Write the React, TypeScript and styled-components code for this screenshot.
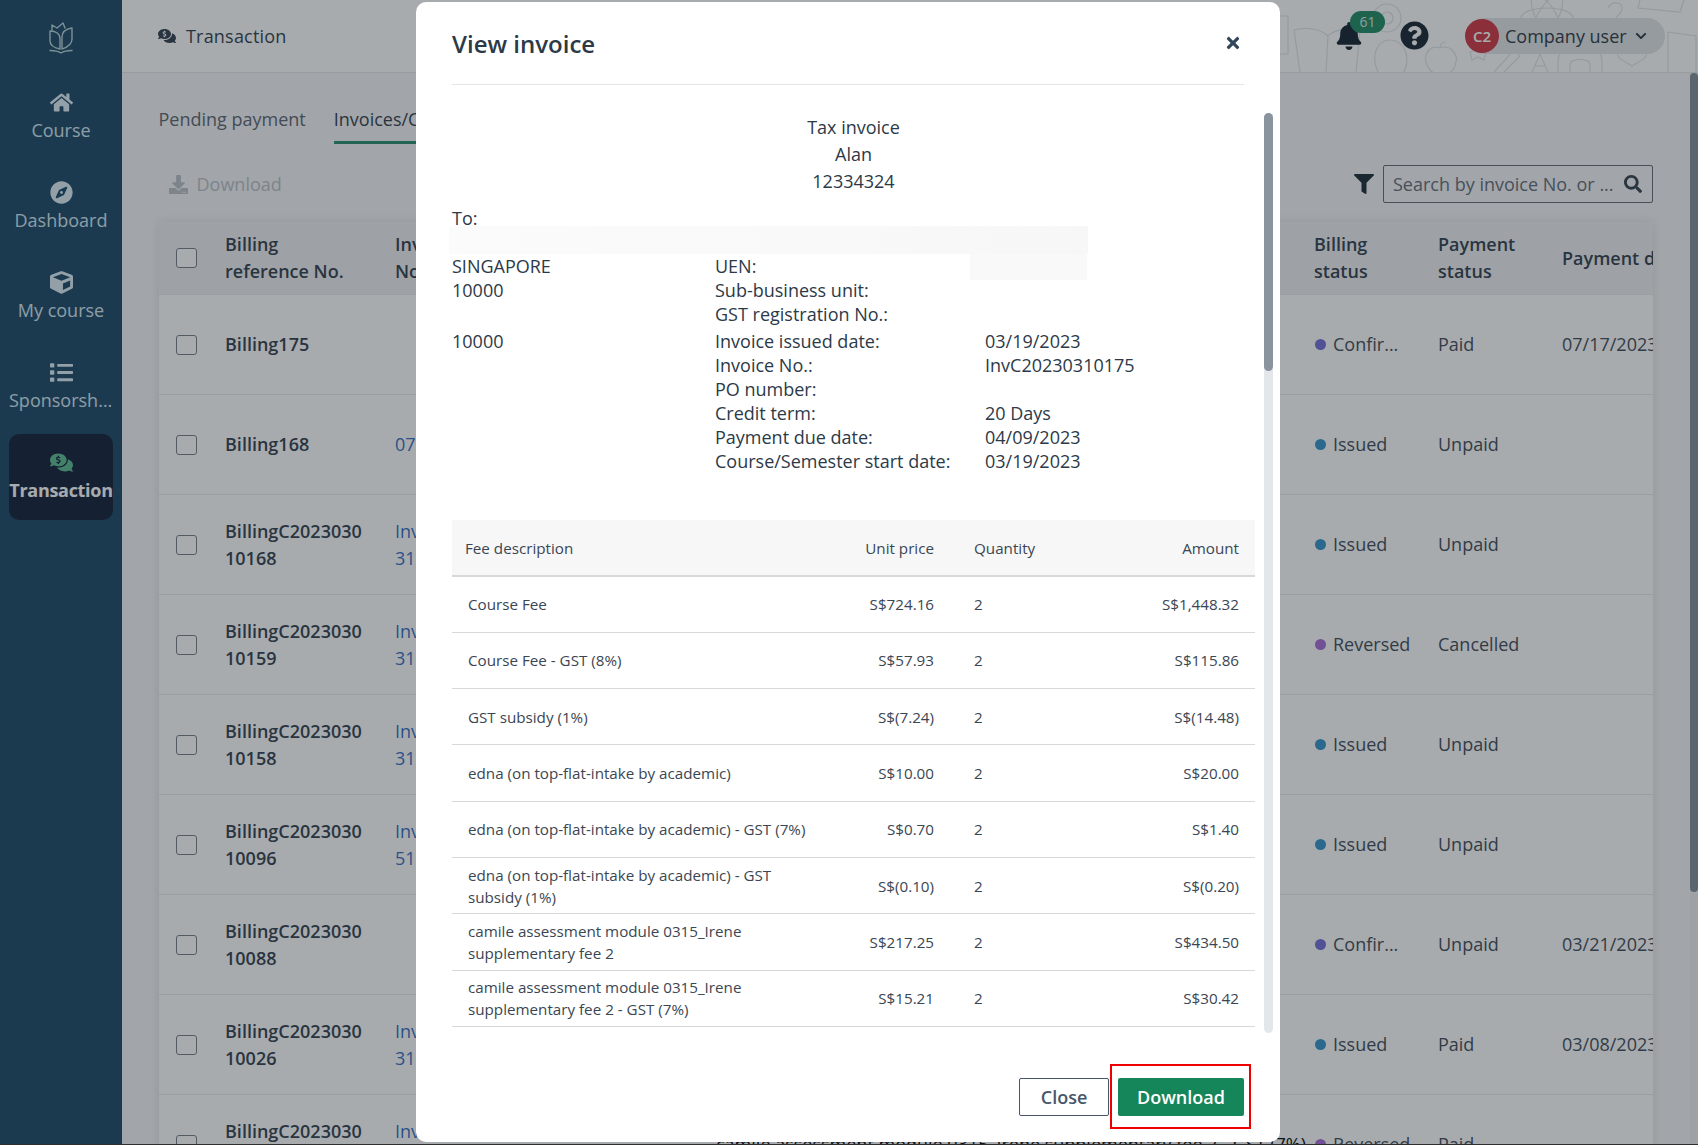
import React from "react";
import styled, { createGlobalStyle } from "styled-components";
import {
  FaHome, FaCompass, FaCube, FaList, FaCommentsDollar, FaDownload, FaFilter, FaSearch,
  FaBell, FaQuestionCircle, FaTimes, FaChevronDown,
} from "react-icons/fa";

const Global = createGlobalStyle`
  html, body { margin: 0; padding: 0; height: 100%; overflow: hidden; }
  body { font-family: "Open Sans", "Noto Sans", sans-serif; color: #2c3a48; }
  * { box-sizing: border-box; }
`;

const Layout = styled.div`
  display: flex; width: 1698px; height: 1145px; overflow: hidden; background: #f5f6f7;
  border-bottom: 1px solid #333;
`;
const Sidebar = styled.nav`
  width: 122px; flex: none; background: #144363; display: flex; flex-direction: column; gap: 4px;
`;
const LogoBox = styled.div`
  height: 70px; display: flex; align-items: flex-start; justify-content: center; padding-top: 22px; color: #b6d3d6;
`;
const NavItem = styled.div<{ $active?: boolean }>`
  width: 104px; height: 86px; margin: 0 auto; border-radius: 10px; padding-top: 17px;
  display: flex; flex-direction: column; align-items: center;
  background: ${p => (p.$active ? "#0a1a33" : "transparent")};
  color: ${p => (p.$active ? "#ffffff" : "#d4e7f0")};
  svg { font-size: 23px; height: 23px; color: ${p => (p.$active ? "#57b98f" : "#dcedf5")}; flex: none; }
`;
const NavLabel = styled.div<{ $active?: boolean }>`
  margin-top: 3px; font-size: 18px; line-height: 27px; width: 104px; text-align: center;
  white-space: nowrap; overflow: hidden; text-overflow: ellipsis;
  font-weight: ${p => (p.$active ? 700 : 400)};
  letter-spacing: ${p => (p.$active ? "-0.3px" : "0")};
`;

const Main = styled.div`flex: 1; min-width: 0; display: flex; flex-direction: column;`;
const Header = styled.header`
  height: 73px; flex: none; background: #ffffff; border-bottom: 1px solid #e4e6e9; position: relative;
  display: flex; align-items: center; padding-left: 36px;
`;
const Doodles = styled.svg`
  position: absolute; right: 0; top: 0; width: 418px; height: 72px; fill: none; stroke: #dfe3e6; stroke-width: 1.2;
`;
const PageTitle = styled.div`
  display: flex; align-items: center; gap: 10px; font-size: 18px; font-weight: 400; color: #2b3a48; letter-spacing: .2px;
  svg { font-size: 18px; color: #2b3a48; }
`;
const HeaderRight = styled.div`
  position: absolute; top: 0; left: 1213px; height: 72px; width: 360px;
`;
const BellWrap = styled.div`
  position: absolute; left: 0; top: 22px; color: #0d1b28; font-size: 28px; line-height: 0;
`;
const Badge = styled.div`
  position: absolute; left: 15px; top: -11px; width: 35px; height: 22px; border-radius: 11px;
  background: #19885f; color: #d7e9e1; font-size: 14px; line-height: 22px; text-align: center;
`;
const Help = styled.div`position: absolute; left: 65px; top: 21px; font-size: 29px; line-height: 0; color: #10202e;`;
const UserPill = styled.div`
  position: absolute; left: 132px; top: 18px; width: 198px; height: 36px; border-radius: 18px;
  background: #e2e4e7; display: flex; align-items: center; color: #27333f; font-size: 18px;
`;
const Avatar = styled.div`
  width: 34px; height: 34px; border-radius: 50%; background: #cf3340; color: #fff; font-size: 15px; font-weight: 600;
  display: flex; align-items: center; justify-content: center; margin-left: -2px; margin-right: 6px; flex: none;
`;
const Chev = styled.span`margin-left: 8px; font-size: 12px; line-height: 0;`;

const Body = styled.div`flex: 1; min-height: 0; display: flex;`;
const Content = styled.div`flex: 1; min-width: 0; padding: 0 37px 0 36.5px;`;
const ScrollTrack = styled.div`width: 8px; flex: none; background: #f1f1f1;`;
const ScrollThumb = styled.div<{ $h: number }>`
  height: ${p => p.$h}px; background: #7f8b96; border-radius: 4px;
`;
const Tabs = styled.div`display: flex; gap: 28px; height: 71px; align-items: flex-end;`;
const Tab = styled.div<{ $active?: boolean }>`
  font-size: 18px; line-height: 27px; height: 38px; white-space: nowrap;
  color: ${p => (p.$active ? "#2c3a48" : "#55616d")};
  border-bottom: 3px solid ${p => (p.$active ? "#1f8a66" : "transparent")};
  font-weight: 400;
`;
const Toolbar = styled.div`
  height: 38px; margin: 21px 0 19px; display: flex; justify-content: space-between; align-items: center;
`;
const DownloadLink = styled.div`
  display: flex; align-items: center; gap: 9px; padding-left: 10px; font-size: 18px; color: #b8bec4;
  svg { font-size: 19px; }
`;
const SearchRow = styled.div`display: flex; align-items: center; gap: 9px;`;
const FilterIcon = styled.div`font-size: 20px; line-height: 0; color: #15232f;`;
const SearchBox = styled.div`
  width: 270px; height: 38px; border: 1px solid #5d6975; border-radius: 2px; display: flex; align-items: center;
  padding: 0 10px 0 9px; color: #2e3c49;
  svg { font-size: 18px; flex: none; }
`;
const SearchInput = styled.input`
  flex: 1; min-width: 0; border: 0; outline: 0; background: transparent; font: 18px "Open Sans", sans-serif; padding: 0;
  &::placeholder { color: #5d6975; opacity: 1; }
`;
const DataTable = styled.div`
  width: 1494.5px; background: #fff; box-shadow: 0 0 10px rgba(40,50,60,.12); border-radius: 4px 4px 0 0; overflow: hidden;
`;
const GridRow = styled.div<{ $head?: boolean }>`
  display: grid; grid-template-columns: 66.5px 170px 320px 599px 124px 124px 150px; align-items: center;
  height: ${p => (p.$head ? 73 : 100)}px; border-bottom: 1px solid #e8eaec;
  background: ${p => (p.$head ? "#eff1f3" : "#ffffff")};
  font-size: 18px; line-height: 27px;
`;
const Check = styled.span`
  display: block; width: 21px; height: 20px; margin-left: 17px; border: 1px solid #707a84; border-radius: 3px; background: #fff;
`;
const HeadCell = styled.div`font-weight: 600; color: #2c3a48; white-space: pre-line; overflow: hidden; white-space: pre;`;
const RefCell = styled.div`font-weight: 600; color: #2c3a48; white-space: pre;`;
const InvCell = styled.div`color: #2f6bc0; white-space: pre;`;
const MidCell = styled.div`color: #000; white-space: nowrap; overflow: hidden; padding-left: 1px;`;
const PlainCell = styled.div`color: #3a4653; white-space: nowrap;`;
const StatusCell = styled.div`display: flex; align-items: center; gap: 7px; color: #3a4653; white-space: nowrap; padding-left: 1px;`;
const Dot = styled.span<{ $c: string }>`
  width: 11px; height: 11px; border-radius: 50%; background: ${p => p.$c}; flex: none;
`;

const Overlay = styled.div`
  position: fixed; inset: 0; background: rgba(37,45,52,.4); display: flex; justify-content: center; padding: 2px 2px 0 0;
`;
const Modal = styled.div`
  width: 864px; height: 1140px; background: #fff; border-radius: 10px; display: flex; flex-direction: column;
`;
const ModalHead = styled.div`
  height: 83px; flex: none; margin: 0 36px; border-bottom: 1px solid #e4e6e9;
  display: flex; align-items: center; justify-content: space-between;
`;
const ModalTitle = styled.h2`margin: 0; font-size: 24px; font-weight: 600; color: #2c3a48;`;
const CloseX = styled.div`font-size: 18px; line-height: 0; color: #34475a; margin-right: 2px;`;
const ModalBody = styled.div`
  height: 948px; flex: none; display: flex; gap: 9px; padding: 0 7px 0 36px; overflow: hidden;
`;
const Doc = styled.div`flex: 1; min-width: 0; font-size: 18px; color: #2c3a48;`;
const Centered = styled.div`margin-top: 29px; text-align: center; line-height: 27px; width: 803px; padding-right: 0;`;
const ToLine = styled.div`margin-top: 11px; height: 24px; line-height: 24px;`;
const RedactA = styled.div`
  margin: -4px 0 0 -3px; width: 639px; height: 28px; background: linear-gradient(90deg,#fbfbfb,#f7f7f7);
`;
const InfoBlock = styled.div`position: relative;`;
const RedactB = styled.div`
  position: absolute; left: 518px; top: 0; width: 117px; height: 26px; background: #f9f9f9;
`;
const InfoRow = styled.div<{ $extra?: boolean }>`
  display: grid; grid-template-columns: 263px 270px 1fr; height: 24px; line-height: 24px; white-space: nowrap;
  margin-top: ${p => (p.$extra ? 3 : 0)}px;
`;
const Fee = styled.table`
  width: 803px; margin-top: 47px; border-collapse: collapse; table-layout: fixed; font-size: 15.2px; color: #3a4653; line-height: 22px;
`;
const FeeHeadCell = styled.th<{ $right?: boolean; $pl?: number; $pr?: number }>`
  height: 56px; background: #f7f7f7; font-weight: 400; border-bottom: 2px solid #d6d8da;
  text-align: ${p => (p.$right ? "right" : "left")};
  padding: 0 ${p => p.$pr ?? 0}px 0 ${p => p.$pl ?? 0}px;
`;
const FeeCell = styled.td<{ $right?: boolean; $pl?: number; $pr?: number }>`
  height: 56.3px; border-bottom: 1.5px solid #d6d8da;
  text-align: ${p => (p.$right ? "right" : "left")};
  padding: 0 ${p => p.$pr ?? 0}px 0 ${p => p.$pl ?? 0}px;
`;
const ModalTrack = styled.div`
  width: 9px; flex: none; margin-top: 28px; height: 920px; background: #e4e7ea; border-radius: 5px;
`;
const ModalThumb = styled.div`height: 258px; background: #8a949e; border-radius: 5px;`;
const ModalFoot = styled.div`
  flex: 1; display: flex; justify-content: flex-end; gap: 9px; padding: 45px 36px 0 0;
`;
const CloseBtn = styled.button`
  width: 90px; height: 38px; background: #fff; border: 1px solid #46566a; border-radius: 2px; color: #46566a;
  font: 600 18px "Open Sans", sans-serif; padding: 0;
`;
const DownloadWrap = styled.div`position: relative; height: 38px;`;
const DownloadBtn = styled.button`
  width: 126px; height: 38px; background: #15855a; border: 0; border-radius: 2px; color: #fff;
  font: 600 18px "Open Sans", sans-serif; padding: 0;
`;
const RedFrame = styled.div`
  position: absolute; left: -8px; right: -7px; top: -14px; bottom: -13px; border: 2px solid #ee0000; pointer-events: none;
`;

const rows = [
  { r: "Billing175", i: "", s: "Confir...", c: "#6f6ad6", p: "Paid", d: "07/17/2023" },
  { r: "Billing168", i: "070", s: "Issued", c: "#2f8fca", p: "Unpaid", d: "" },
  { r: "BillingC2023030\n10168", i: "InvC2023\n310168", s: "Issued", c: "#2f8fca", p: "Unpaid", d: "" },
  { r: "BillingC2023030\n10159", i: "InvC2023\n310159", s: "Reversed", c: "#a468d8", p: "Cancelled", d: "" },
  { r: "BillingC2023030\n10158", i: "InvC2023\n310158", s: "Issued", c: "#2f8fca", p: "Unpaid", d: "" },
  { r: "BillingC2023030\n10096", i: "InvC2023\n510096", s: "Issued", c: "#2f8fca", p: "Unpaid", d: "" },
  { r: "BillingC2023030\n10088", i: "", s: "Confir...", c: "#6f6ad6", p: "Unpaid", d: "03/21/2023" },
  { r: "BillingC2023030\n10026", i: "InvC2023\n310026", s: "Issued", c: "#2f8fca", p: "Paid", d: "03/08/2023" },
  { r: "BillingC2023030\n10019", i: "InvC2023\n310019", s: "Reversed...", c: "#a468d8", p: "Paid", d: "", m: "camile assessment module 0315_Irene supplementary fee 2 - GST (7%)" },
];

const fees = [
  ["Course Fee", "S$724.16", "S$1,448.32"],
  ["Course Fee - GST (8%)", "S$57.93", "S$115.86"],
  ["GST subsidy (1%)", "S$(7.24)", "S$(14.48)"],
  ["edna (on top-flat-intake by academic)", "S$10.00", "S$20.00"],
  ["edna (on top-flat-intake by academic) - GST (7%)", "S$0.70", "S$1.40"],
  ["edna (on top-flat-intake by academic) - GST subsidy (1%)", "S$(0.10)", "S$(0.20)"],
  ["camile assessment module 0315_Irene supplementary fee 2", "S$217.25", "S$434.50"],
  ["camile assessment module 0315_Irene supplementary fee 2 - GST (7%)", "S$15.21", "S$30.42"],
];

const info = [
  ["SINGAPORE", "UEN:", ""],
  ["10000", "Sub-business unit:", ""],
  ["", "GST registration No.:", ""],
  ["10000", "Invoice issued date:", "03/19/2023"],
  ["", "Invoice No.:", "InvC20230310175"],
  ["", "PO number:", ""],
  ["", "Credit term:", "20 Days"],
  ["", "Payment due date:", "04/09/2023"],
  ["", "Course/Semester start date:", "03/19/2023"],
];

const Logo = () => (
  <svg width="24" height="32" viewBox="0 0 24 32" fill="none" stroke="currentColor" strokeWidth="1.4" strokeLinejoin="round" strokeLinecap="round">
    <path d="M1 9 L1 19 C1 24 6 26 11 27 L11 17 C11 12 7 9 1 9 Z" />
    <path d="M3 8 L3 3 L8 6 L14 1 L16 6" />
    <path d="M13 27 L13 15 C13 10 17 7 23 6 L23 17 C23 22 19 25 13 27 Z" />
    <path d="M1 28.5 C5 28.5 9 29 12 31 C15 29 19 28.5 23 28.5" />
  </svg>
);

const HeaderDoodles = () => (
  <Doodles viewBox="0 0 418 72">
    <path d="M0 16 h8 v38 h-8" />
    <path d="M14 30 C28 26 42 30 48 36 C54 30 66 28 80 30 L76 72 M14 30 L20 72 M48 36 L46 72" />
    <circle cx="107" cy="18" r="14" /><circle cx="107" cy="18" r="6" />
    <path d="M98 72 C90 54 98 40 110 40 C122 40 132 54 124 72" />
    <path d="M160 48 C150 44 144 54 146 62 C148 70 152 72 153 72 M160 48 C170 44 178 54 176 62 C175 68 172 72 170 72 M160 48 C160 44 162 42 166 42" />
    <path d="M190 52 l8 -3 l8 3 l-2 8 l-6 -3 l-6 3 z" />
    <path d="M214 72 L234 50 L240 56 L224 72" />
    <ellipse cx="267" cy="18" rx="26" ry="10" /><ellipse cx="267" cy="18" rx="26" ry="10" transform="rotate(60 267 18)" /><ellipse cx="267" cy="18" rx="26" ry="10" transform="rotate(120 267 18)" />
    <path d="M252 72 L260 54 L268 72 M255 66 h10" />
    <path d="M278 72 V62 C278 50 290 44 300 44 C310 44 322 50 322 62 V72 M290 72 V64 C290 58 310 58 310 64 V72" />
    <path d="M328 8 C332 0 344 2 342 10 C340 16 334 16 334 24" />
    <path d="M338 50 C345 42 352 48 352 52 C352 48 360 42 366 50 C370 58 358 62 352 66 C346 62 334 58 338 50 Z" />
    <path d="M360 0 L358 8 L400 12 L404 0" />
    <path d="M388 32 L416 36 V72 M388 32 V72" />
  </Doodles>
);

export default function App() {
  return (
    <>
      <Global />
      <Layout>
        <Sidebar>
          <LogoBox><Logo /></LogoBox>
          <NavItem><FaHome /><NavLabel>Course</NavLabel></NavItem>
          <NavItem><FaCompass /><NavLabel>Dashboard</NavLabel></NavItem>
          <NavItem><FaCube /><NavLabel>My course</NavLabel></NavItem>
          <NavItem><FaList /><NavLabel>Sponsorship</NavLabel></NavItem>
          <NavItem $active><FaCommentsDollar /><NavLabel $active>Transaction</NavLabel></NavItem>
        </Sidebar>
        <Main>
          <Header>
            <HeaderDoodles />
            <PageTitle><FaCommentsDollar />Transaction</PageTitle>
            <HeaderRight>
              <BellWrap><FaBell /><Badge>61</Badge></BellWrap>
              <Help><FaQuestionCircle /></Help>
              <UserPill>
                <Avatar>C2</Avatar>Company user<Chev><FaChevronDown /></Chev>
              </UserPill>
            </HeaderRight>
          </Header>
          <Body>
            <Content>
              <Tabs>
                <Tab>Pending payment</Tab>
                <Tab $active>Invoices/Credit notes</Tab>
              </Tabs>
              <Toolbar>
                <DownloadLink><FaDownload />Download</DownloadLink>
                <SearchRow>
                  <FilterIcon><FaFilter /></FilterIcon>
                  <SearchBox>
                    <SearchInput placeholder="Search by invoice No. or ..." />
                    <FaSearch />
                  </SearchBox>
                </SearchRow>
              </Toolbar>
              <DataTable>
                <GridRow $head>
                  <Check />
                  <HeadCell>{"Billing\nreference No."}</HeadCell>
                  <HeadCell>{"Invoice\nNo."}</HeadCell>
                  <span />
                  <HeadCell>{"Billing\nstatus"}</HeadCell>
                  <HeadCell>{"Payment\nstatus"}</HeadCell>
                  <HeadCell>Payment date</HeadCell>
                </GridRow>
                {rows.map(row => (
                  <GridRow key={row.r}>
                    <Check />
                    <RefCell>{row.r}</RefCell>
                    <InvCell>{row.i}</InvCell>
                    <MidCell>{row.m}</MidCell>
                    <StatusCell><Dot $c={row.c} />{row.s}</StatusCell>
                    <PlainCell>{row.p}</PlainCell>
                    <PlainCell>{row.d}</PlainCell>
                  </GridRow>
                ))}
              </DataTable>
            </Content>
            <ScrollTrack><ScrollThumb $h={819} /></ScrollTrack>
          </Body>
        </Main>
      </Layout>
      <Overlay>
        <Modal>
          <ModalHead>
            <ModalTitle>View invoice</ModalTitle>
            <CloseX><FaTimes /></CloseX>
          </ModalHead>
          <ModalBody>
            <Doc>
              <Centered>Tax invoice<br />Alan<br />12334324</Centered>
              <ToLine>To:</ToLine>
              <RedactA />
              <InfoBlock>
                <RedactB />
                {info.map((r, i) => (
                  <InfoRow key={i} $extra={i === 3}>
                    <span>{r[0]}</span><span>{r[1]}</span><span>{r[2]}</span>
                  </InfoRow>
                ))}
              </InfoBlock>
              <Fee>
                <colgroup>
                  <col style={{ width: 368 }} /><col style={{ width: 130 }} /><col style={{ width: 120 }} /><col />
                </colgroup>
                <thead>
                  <tr>
                    <FeeHeadCell $pl={13}>Fee description</FeeHeadCell>
                    <FeeHeadCell $right $pr={16}>Unit price</FeeHeadCell>
                    <FeeHeadCell $pl={24}>Quantity</FeeHeadCell>
                    <FeeHeadCell $right $pr={16}>Amount</FeeHeadCell>
                  </tr>
                </thead>
                <tbody>
                  {fees.map(f => (
                    <tr key={f[0]}>
                      <FeeCell $pl={16}>{f[0]}</FeeCell>
                      <FeeCell $right $pr={16}>{f[1]}</FeeCell>
                      <FeeCell $pl={24}>2</FeeCell>
                      <FeeCell $right $pr={16}>{f[2]}</FeeCell>
                    </tr>
                  ))}
                </tbody>
              </Fee>
            </Doc>
            <ModalTrack><ModalThumb /></ModalTrack>
          </ModalBody>
          <ModalFoot>
            <CloseBtn>Close</CloseBtn>
            <DownloadWrap>
              <DownloadBtn>Download</DownloadBtn>
              <RedFrame />
            </DownloadWrap>
          </ModalFoot>
        </Modal>
      </Overlay>
    </>
  );
}
